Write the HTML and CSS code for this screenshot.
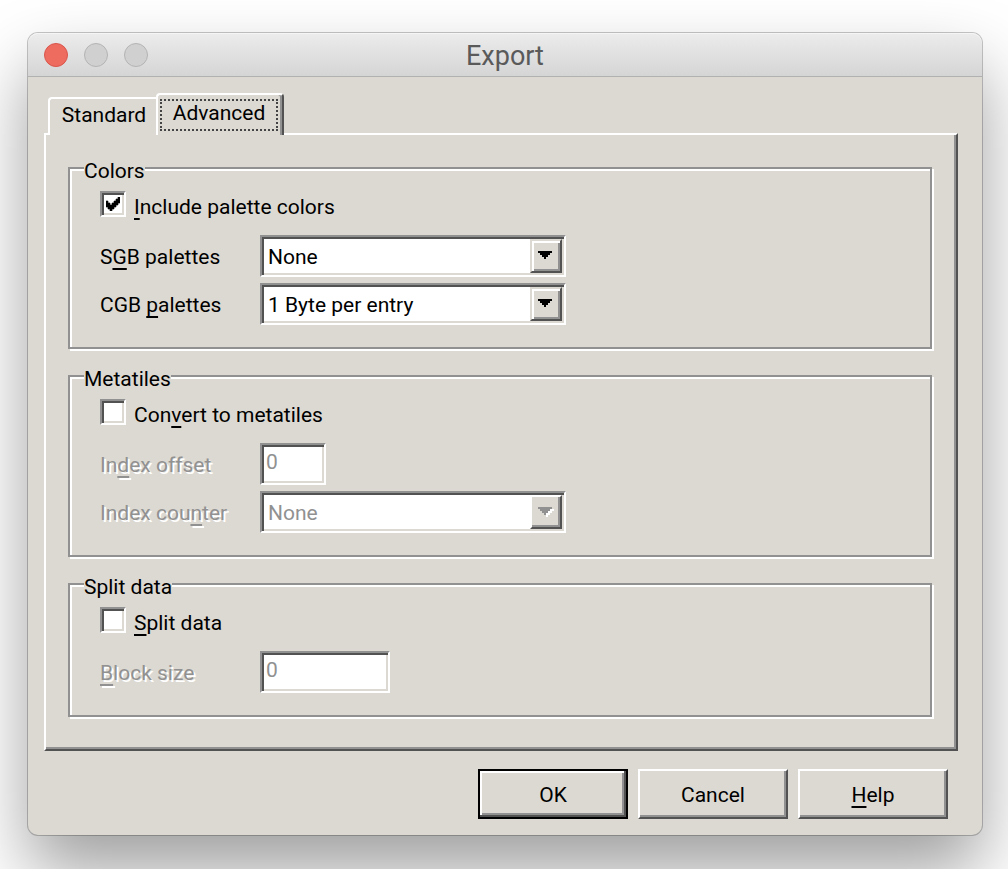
FILE: index.html
```html
<!DOCTYPE html>
<html lang="en">
<head>
<meta charset="utf-8">
<title>Export</title>
<link rel="stylesheet" href="styles.css">
</head>
<body>
<main class="window">
  <header class="titlebar">
    <div class="lights">
      <button class="light light-close" type="button" aria-label="Close"></button>
      <button class="light" type="button" aria-label="Minimize" disabled></button>
      <button class="light" type="button" aria-label="Zoom" disabled></button>
    </div>
    <h1 class="title">Export</h1>
  </header>
  <form class="client">
    <div class="tabs" role="tablist">
      <button class="tab" type="button" role="tab" aria-selected="false">Standard</button>
      <button class="tab tab-active" type="button" role="tab" aria-selected="true"><span class="focus-ring">Advanced</span></button>
    </div>
    <section class="panel" role="tabpanel">
      <fieldset class="group">
        <legend class="legend">Colors</legend>
        <div class="check-row">
          <span class="check">
            <input class="check-input" type="checkbox" id="include" checked>
            <svg class="check-mark" viewBox="0 0 7 7" aria-hidden="true"><path d="M0 2h1v1h1v1h1V3h1V2h1V1h1V0h1v3H6v1H5v1H4v1H3v1H2V6H1V5H0z"/></svg>
          </span>
          <label class="check-label" for="include"><u>I</u>nclude palette colors</label>
        </div>
        <div class="fields">
          <label class="label" for="sgb">S<u>G</u>B palettes</label>
          <span class="combo">
            <select class="select" id="sgb"><option>None</option></select>
            <span class="arrow"><svg class="arrow-icon" viewBox="0 0 8 5" shape-rendering="crispEdges" aria-hidden="true"><path d="M0 0h7v1H6v1H5v1H4v1H3V3H2V2H1V1H0z"/></svg></span>
          </span>
          <label class="label" for="cgb">CGB <u>p</u>alettes</label>
          <span class="combo">
            <select class="select" id="cgb"><option>1 Byte per entry</option></select>
            <span class="arrow"><svg class="arrow-icon" viewBox="0 0 8 5" shape-rendering="crispEdges" aria-hidden="true"><path d="M0 0h7v1H6v1H5v1H4v1H3V3H2V2H1V1H0z"/></svg></span>
          </span>
        </div>
      </fieldset>
      <fieldset class="group">
        <legend class="legend">Metatiles</legend>
        <div class="check-row">
          <span class="check"><input class="check-input" type="checkbox" id="convert"></span>
          <label class="check-label" for="convert">Con<u>v</u>ert to metatiles</label>
        </div>
        <div class="fields">
          <label class="label label-off" for="offset">In<u>d</u>ex offset</label>
          <input class="text text-short" type="text" id="offset" value="0" disabled>
          <label class="label label-off" for="counter">Index cou<u>n</u>ter</label>
          <span class="combo">
            <select class="select" id="counter" disabled><option>None</option></select>
            <span class="arrow arrow-off"><svg class="arrow-icon" viewBox="0 0 8 5" shape-rendering="crispEdges" aria-hidden="true"><path class="arrow-shadow" d="M1 1h7v1H7v1H6v1H5v1H4V4H3V3H2V2H1z"/><path d="M0 0h7v1H6v1H5v1H4v1H3V3H2V2H1V1H0z"/></svg></span>
          </span>
        </div>
      </fieldset>
      <fieldset class="group">
        <legend class="legend">Split data</legend>
        <div class="check-row">
          <span class="check"><input class="check-input" type="checkbox" id="split"></span>
          <label class="check-label" for="split"><u>S</u>plit data</label>
        </div>
        <div class="fields">
          <label class="label label-off" for="block"><u>B</u>lock size</label>
          <input class="text text-long" type="text" id="block" value="0" disabled>
        </div>
      </fieldset>
    </section>
    <div class="actions">
      <button class="button button-default" type="submit">OK</button>
      <button class="button" type="button">Cancel</button>
      <button class="button" type="button"><u>H</u>elp</button>
    </div>
  </form>
</main>
</body>
</html>
```
FILE: styles.css
```css
:root {
  --face: #dcd9d2;
  --light: #ffffff;
  --mid: #919191;
  --dark: #525252;
}

* { box-sizing: border-box; }

body {
  margin: 0;
  padding: 33px 26px 34px 28px;
  background: #fff;
  color: #000;
  font: 21px/24px Roboto, sans-serif;
}

button, input, select {
  margin: 0;
  padding: 0;
  border: 0;
  border-radius: 0;
  color: inherit;
  font: inherit;
  appearance: none;
}

u {
  text-decoration-thickness: 2px;
  text-underline-offset: 4px;
  text-decoration-skip-ink: none;
}

.window {
  border-radius: 10px;
  background: var(--face);
  box-shadow: 0 0 0 1px rgba(0, 0, 0, .22), 0 36px 70px rgba(0, 0, 0, .38);
}

.titlebar {
  display: grid;
  grid-template-columns: 1fr auto 1fr;
  align-items: center;
  height: 44px;
  padding: 0 16px;
  border-bottom: 1px solid #b1b1b1;
  border-radius: 10px 10px 0 0;
  background: linear-gradient(#ececec, #d5d5d5);
  box-shadow: inset 0 1px 0 #f5f5f5;
}

.lights { display: flex; gap: 16px; }

.light {
  width: 24px;
  height: 24px;
  border: 1px solid #b4b4b4;
  border-radius: 50%;
  background: #d0d0d0;
}

.light-close { border-color: #d9564c; background: #ee6b60; }

.title {
  margin: 0;
  padding-top: 2px;
  color: #5a5a5a;
  font: 400 27px/32px Roboto, sans-serif;
}

.client { padding: 16px 24px 16px 16px; }

.tabs {
  display: flex;
  align-items: flex-end;
  padding-left: 4px;
}

.tab {
  height: 38px;
  min-width: 108px;
  margin-bottom: -2px;
  padding: 0 8px 4px 10px;
  border: 2px solid var(--light);
  border-width: 2px 0 0 2px;
  border-radius: 4px 0 0 0;
  background: var(--face);
}

.tab-active {
  position: relative;
  height: 42px;
  min-width: 128px;
  padding: 4px 4px 4px 2px;
  border-right: 2px solid var(--dark);
  border-radius: 4px 4px 0 0;
  box-shadow: inset -2px 0 0 var(--mid);
}

.focus-ring {
  display: block;
  padding: 0 8px 4px;
  border: 2px dotted #444;
}

.panel {
  display: grid;
  gap: 15px;
  padding: 21px 24px 32px 22px;
  border: 2px solid;
  border-color: var(--light) var(--dark) var(--dark) var(--light);
  box-shadow: inset -2px -2px 0 var(--mid);
}

.group {
  min-width: 0;
  margin: 0;
  padding: 11px 30px 22px;
  border: 2px solid var(--mid);
  box-shadow: 2px 2px 0 var(--light), inset 2px 2px 0 var(--light);
}

.legend {
  height: 24px;
  margin-left: -16px;
  padding: 5px 0 0;
  background: var(--face);
  line-height: 20px;
}

.check-row {
  display: flex;
  gap: 8px;
  height: 30px;
  margin-bottom: 10px;
}

.check { position: relative; width: 26px; height: 26px; }

.check-input {
  display: block;
  width: 26px;
  height: 26px;
}

.check-mark {
  position: absolute;
  left: 6px;
  top: 6px;
  width: 14px;
  height: 14px;
  stroke: #000;
  stroke-width: .3px;
  pointer-events: none;
}

.check-label { line-height: 32px; }

.fields {
  display: grid;
  grid-template-columns: 160px 1fr;
  row-gap: 6px;
  align-items: center;
  padding-top: 4px;
}

.label { padding-top: 2px; }
.label-off { color: var(--mid); text-shadow: 2px 2px 0 var(--light); }

.check-input, .combo, .text {
  border: 2px solid;
  border-color: var(--mid) var(--light) var(--light) var(--mid);
  background: #fff;
  box-shadow: inset 2px 2px 0 var(--dark), inset -2px -2px 0 var(--face);
}

.combo {
  position: relative;
  width: 306px;
  height: 42px;
}

.select {
  display: block;
  width: 100%;
  height: 100%;
  padding: 2px 36px 0 6px;
  background: transparent;
}

.text { height: 42px; padding: 0 4px 4px 4px; }
.text-short { width: 66px; }
.text-long { width: 130px; }

.select:disabled, .text:disabled { color: var(--mid); opacity: 1; }

.arrow {
  position: absolute;
  top: 2px;
  right: 2px;
  width: 32px;
  height: 34px;
  padding: 10px 6px;
  border: 2px solid;
  border-color: var(--face) var(--dark) var(--dark) var(--face);
  background: var(--face);
  box-shadow: inset 2px 2px 0 var(--light), inset -2px -2px 0 var(--mid);
  pointer-events: none;
}

.arrow-off {
  border-color: var(--light) var(--dark) var(--dark) var(--light);
  box-shadow: inset -2px -2px 0 var(--mid);
}

.arrow-icon { display: block; width: 16px; height: 10px; }
.arrow-off .arrow-icon { fill: var(--mid); }
.arrow-off .arrow-shadow { fill: var(--light); }

.actions {
  display: flex;
  justify-content: flex-end;
  gap: 10px;
  padding: 18px 10px 0 0;
}

.button {
  width: 150px;
  height: 50px;
  padding-top: 2px;
  border: 2px solid;
  border-color: var(--light) var(--dark) var(--dark) var(--light);
  background: var(--face);
  box-shadow: inset -2px -2px 0 var(--mid);
}

.button-default {
  border-color: #000;
  box-shadow: inset -2px -2px 0 var(--dark), inset 2px 2px 0 var(--light), inset -4px -4px 0 var(--mid);
}
```
